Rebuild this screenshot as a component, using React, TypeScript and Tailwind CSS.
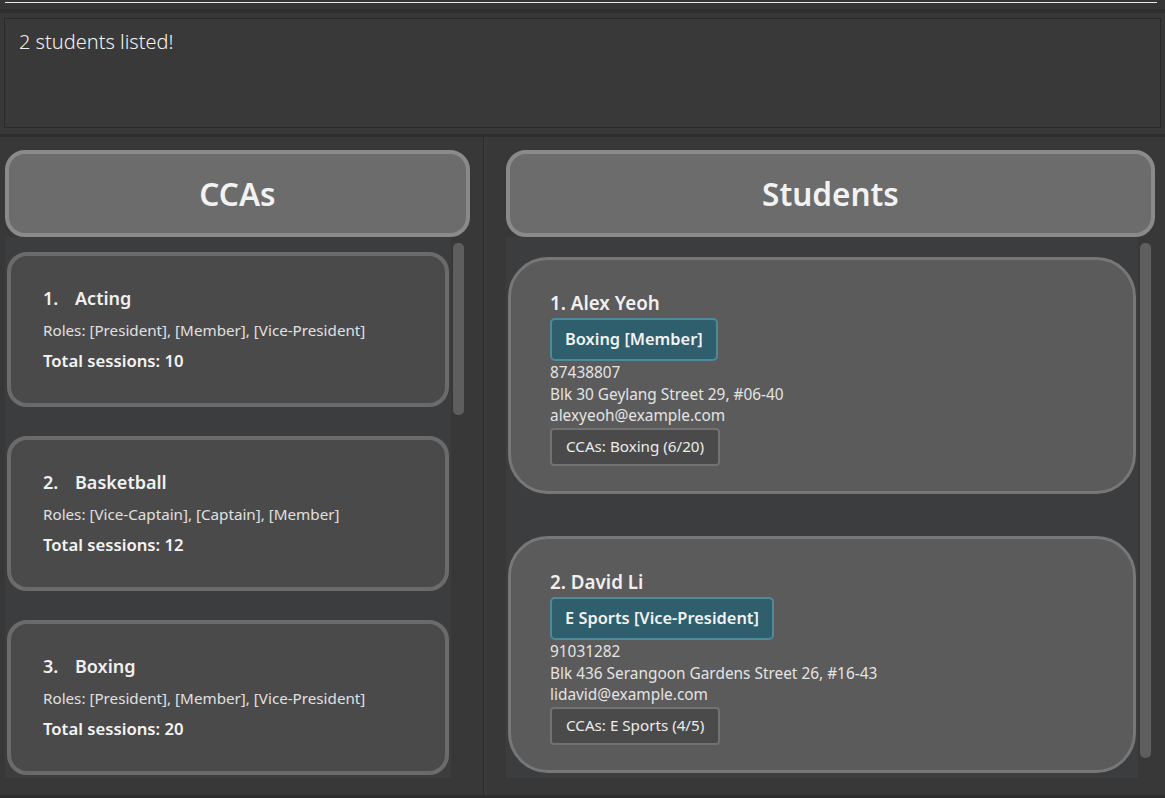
import React from "react";

const ccas = [
  { no: "1.", name: "Acting", roles: "Roles: [President], [Member], [Vice-President]", total: 10 },
  { no: "2.", name: "Basketball", roles: "Roles: [Vice-Captain], [Captain], [Member]", total: 12 },
  { no: "3.", name: "Boxing", roles: "Roles: [President], [Member], [Vice-President]", total: 20 },
];

const students = [
  {
    name: "1. Alex Yeoh",
    tag: "Boxing [Member]",
    phone: "87438807",
    address: "Blk 30 Geylang Street 29, #06-40",
    email: "alexyeoh@example.com",
    ccas: "CCAs: Boxing (6/20)",
  },
  {
    name: "2. David Li",
    tag: "E Sports [Vice-President]",
    phone: "91031282",
    address: "Blk 436 Serangoon Gardens Street 26, #16-43",
    email: "lidavid@example.com",
    ccas: "CCAs: E Sports (4/5)",
  },
];

const font = { fontFamily: '"Noto Sans", "Open Sans", sans-serif' };

const Header = ({ title }: { title: string }) => (
  <div className="h-[87px] rounded-[20px] border-[4px] border-[#8a8a8a] bg-[#6c6c6c] flex items-center justify-center">
    <span className="text-[31.5px] font-semibold text-[#f2f2f2] leading-none">{title}</span>
  </div>
);

const Scrollbar = ({ h }: { h: string }) => (
  <div className="w-[15px] pt-[6px] flex justify-center">
    <div className={`w-[11px] ${h} rounded-[5px] bg-[#5e5e5e]`} />
  </div>
);

const App = () => {
  return (
    <div className="w-[1165px] h-[798px] bg-[#383838] flex flex-col overflow-hidden" style={font}>
      {/* command box edge */}
      <div className="h-[9px] bg-[#353535] px-[5px] pt-[2px]">
        <div className="h-[1px] w-[1152px] bg-[#e8e8e8]" />
      </div>
      <div className="h-[4px] bg-[#2f2f2f]" />

      {/* result display */}
      <div className="px-[4px] pt-[5px] pb-[6px]">
        <div className="h-[110px] border border-[#2a2a2a] bg-[#393939] pl-[14px] pt-[8px]">
          <span className="text-[20px] font-light text-[#f2f2f2]">2 students listed!</span>
        </div>
      </div>
      <div className="h-[3px] bg-[#2d2d2d]" />

      {/* main */}
      <div className="flex flex-1 min-h-0">
        {/* CCA panel */}
        <div className="w-[483px] pl-[5px] pt-[13px] flex flex-col">
          <div className="w-[465px]">
            <Header title="CCAs" />
          </div>
          <div className="flex">
            <div className="w-[446px] h-[541px] bg-[#3c3d3f] pt-[15px] px-[2px] flex flex-col gap-[29px]">
              {ccas.map((c) => (
                <div
                  key={c.no}
                  className="h-[155px] shrink-0 rounded-[20px] border-[4px] border-[#6b6b6b] bg-[#4a4a4a] pl-[32px] pt-[29px]"
                >
                  <div className="flex text-[18px] font-semibold text-[#f0f0f0] leading-[26px]">
                    <span className="w-[32px]">{c.no}</span>
                    <span>{c.name}</span>
                  </div>
                  <div className="mt-[9px] text-[15.2px] text-[#e0e0e0] leading-[20px]">{c.roles}</div>
                  <div className="mt-[10px] text-[16.7px] font-semibold text-[#f4f4f4] leading-[22px]">
                    Total sessions: {c.total}
                  </div>
                </div>
              ))}
            </div>
            <Scrollbar h="h-[172px]" />
          </div>
        </div>

        {/* divider */}
        <div className="w-[1px] bg-[#2b2b2b]" />
        <div className="w-[3px] bg-[#3b3b3b]" />

        {/* student panel */}
        <div className="flex-1 pl-[19px] pt-[13px] flex flex-col">
          <div className="w-[649px]">
            <Header title="Students" />
          </div>
          <div className="flex">
            <div className="w-[632px] h-[541px] bg-[#3c3d3f] pt-[20px] px-[2px] flex flex-col gap-[42px]">
              {students.map((s) => (
                <div
                  key={s.name}
                  className="h-[237px] shrink-0 rounded-[40px] border-[3px] border-[#777777] bg-[#5b5b5b] pl-[39px] pt-[30px]"
                >
                  <div className="text-[18.8px] font-semibold text-[#f0f0f0] leading-[26px]">{s.name}</div>
                  <div className="mt-[2px] flex">
                    <div className="h-[43px] rounded-[5px] border-[2px] border-[#4f8a9b] bg-[#2f5e6d] px-[13px] flex items-center text-[16.4px] font-semibold text-[#f2f2f2]">
                      {s.tag}
                    </div>
                  </div>
                  <div className="mt-[1px] text-[15.4px] text-[#e4e4e4] leading-[21.5px]">
                    <div>{s.phone}</div>
                    <div>{s.address}</div>
                    <div>{s.email}</div>
                  </div>
                  <div className="mt-[1px] flex">
                    <div className="h-[38px] rounded-[4px] border-[2px] border-[#727272] bg-[#4a4a4a] px-[14px] flex items-center text-[15.2px] text-[#ececec]">
                      {s.ccas}
                    </div>
                  </div>
                </div>
              ))}
            </div>
            <Scrollbar h="h-[515px]" />
          </div>
        </div>
      </div>
      <div className="h-[3px] bg-[#2d2d2d]" />
    </div>
  );
};

export default App;
